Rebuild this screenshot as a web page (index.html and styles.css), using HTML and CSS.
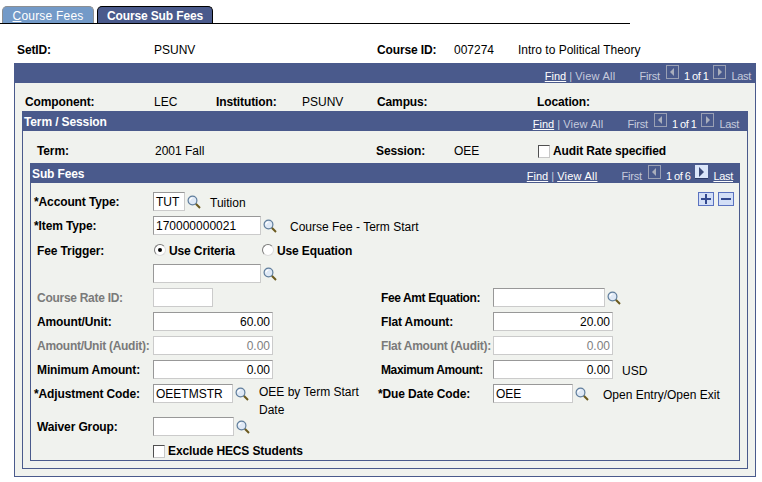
FILE: index.html
```html
<!DOCTYPE html>
<html lang="en">
<head>
<meta charset="utf-8">
<title>Course Sub Fees</title>
<link rel="stylesheet" href="styles.css">
</head>
<body>
<svg class="defs" width="0" height="0" aria-hidden="true">
  <symbol id="lens" viewBox="0 0 14 14">
    <path d="M8.8 8.8 L13 13" stroke="#6b5a1e" stroke-width="2" fill="none"/>
    <circle cx="5.5" cy="5.5" r="4.4" fill="#dfe9f6" stroke="#5f7d9c" stroke-width="1.2"/>
    <path d="M3 5.5 A2.5 2.5 0 0 1 5.5 3" stroke="#fff" stroke-width="1.2" fill="none"/>
  </symbol>
  <symbol id="prev-off" viewBox="0 0 13 14">
    <rect x="0.5" y="0.5" width="12" height="13" fill="none" stroke="#9aa0b4"/>
    <path d="M4 7 L8 3 V11 Z" fill="#a9aebc"/>
  </symbol>
  <symbol id="next-off" viewBox="0 0 13 14">
    <rect x="0.5" y="0.5" width="12" height="13" fill="none" stroke="#9aa0b4"/>
    <path d="M5 3 L9 7 L5 11 Z" fill="#a9aebc"/>
  </symbol>
  <symbol id="next-on" viewBox="0 0 13 14">
    <rect width="13" height="14" fill="#dbe6fa"/>
    <path d="M0 13 H13 V14 H0 Z" fill="#2d3a66"/>
    <path d="M4 2 L9 7 L4 12 Z" fill="#3c4a78"/>
  </symbol>
</svg>
<nav class="tabs">
  <a class="tab tab-off"><u>C</u>ourse Fees</a>
  <a class="tab tab-on">Course Sub Fees</a>
</nav>
<section class="info">
  <b class="info-l1">SetID:</b><span class="info-v1">PSUNV</span>
  <b class="info-l2">Course ID:</b><span class="info-v2">007274</span><span>Intro to Political Theory</span>
</section>
<section class="box box-outer">
  <header class="bar">
    <span class="nav nav-outer"><u>Find</u> | <i class="va">View All</i><i class="first">First</i><svg class="pg"><use href="#prev-off"/></svg><span class="cnt">1 of 1</span><svg class="pg"><use href="#next-off"/></svg><i class="last">Last</i></span>
  </header>
  <div class="comp">
    <b class="c1">Component:</b><span class="c2">LEC</span><b class="c3">Institution:</b><span class="c4">PSUNV</span><b class="c5">Campus:</b><b>Location:</b>
  </div>
  <section class="box box-term">
    <header class="bar"><b class="title">Term / Session</b>
      <span class="nav nav-term"><u>Find</u> | <i class="va">View All</i><i class="first">First</i><svg class="pg"><use href="#prev-off"/></svg><span class="cnt">1 of 1</span><svg class="pg"><use href="#next-off"/></svg><i class="last">Last</i></span>
    </header>
    <div class="term">
      <b class="t1">Term:</b><span class="t2">2001 Fall</span><b class="t3">Session:</b><span class="t4">OEE</span>
      <label class="chk"><span class="cb"></span><b>Audit Rate specified</b></label>
    </div>
    <section class="box box-sub">
      <header class="bar"><b class="title">Sub Fees</b>
        <span class="nav nav-sub"><u>Find</u> | <u class="va">View All</u><i class="first">First</i><svg class="pg"><use href="#prev-off"/></svg><span class="cnt">1 of 6</span><svg class="pg"><use href="#next-on"/></svg><u class="last">Last</u></span>
      </header>
      <div class="form">
        <div class="row">
          <b class="lab req">*Account Type:</b>
          <span class="inp w32">TUT</span><svg class="lens"><use href="#lens"/></svg><span class="desc d1">Tuition</span>
          <span class="grid-btns"><span class="btn btn-add" role="img" aria-label="Add row"></span><span class="btn btn-del" role="img" aria-label="Delete row"></span></span>
        </div>
        <div class="row">
          <b class="lab req">*Item Type:</b>
          <span class="inp w108">170000000021</span><svg class="lens"><use href="#lens"/></svg><span class="desc d2">Course Fee - Term Start</span>
        </div>
        <div class="row row-radio">
          <b class="lab">Fee Trigger:</b>
          <span class="rad rad-on"></span><b class="rl1">Use Criteria</b><span class="rad"></span><b>Use Equation</b>
        </div>
        <div class="row">
          <span class="lab"></span><span class="inp w108"></span><svg class="lens"><use href="#lens"/></svg>
        </div>
        <div class="row">
          <div class="half"><b class="lab dim">Course Rate ID:</b><span class="inp w60 off"></span></div>
          <div class="half"><b class="lab2 tight">Fee Amt Equation:</b><span class="inp w112"></span><svg class="lens"><use href="#lens"/></svg></div>
        </div>
        <div class="row">
          <div class="half"><b class="lab">Amount/Unit:</b><span class="inp w120 num">60.00</span></div>
          <div class="half"><b class="lab2">Flat Amount:</b><span class="inp w120 num">20.00</span></div>
        </div>
        <div class="row">
          <div class="half"><b class="lab dim">Amount/Unit (Audit):</b><span class="inp w120 num off">0.00</span></div>
          <div class="half"><b class="lab2 dim">Flat Amount (Audit):</b><span class="inp w120 num off">0.00</span></div>
        </div>
        <div class="row">
          <div class="half"><b class="lab">Minimum Amount:</b><span class="inp w120 num">0.00</span></div>
          <div class="half"><b class="lab2 tight">Maximum Amount:</b><span class="inp w120 num">0.00</span><span class="desc d3">USD</span></div>
        </div>
        <div class="row row-tall">
          <div class="half"><b class="lab req">*Adjustment Code:</b><span class="inp w80">OEETMSTR</span><svg class="lens"><use href="#lens"/></svg><span class="desc d4">OEE by Term Start Date</span></div>
          <div class="half"><b class="lab2 req2">*Due Date Code:</b><span class="inp w80">OEE</span><svg class="lens"><use href="#lens"/></svg><span class="desc d5">Open Entry/Open Exit</span></div>
        </div>
        <div class="row">
          <b class="lab">Waiver Group:</b><span class="inp w81"></span><svg class="lens"><use href="#lens"/></svg>
        </div>
        <div class="row row-chk">
          <span class="lab"></span><label class="chk"><span class="cb"></span><b>Exclude HECS Students</b></label>
        </div>
      </div>
    </section>
  </section>
</section>
</body>
</html>
```
FILE: styles.css
```css
html, body { margin: 0; padding: 0; background: #fff; }
body { width: 762px; height: 482px; overflow: hidden; font: 12px "Liberation Sans", Arial, sans-serif; color: #000; }
b { font-weight: bold; white-space: nowrap; letter-spacing: -0.12px; }
u { text-decoration: underline; }
i { font-style: normal; }
.defs { position: absolute; }

.tabs { display: flex; gap: 3px; height: 17px; width: 628px; padding: 6px 0 0 2px; border-bottom: 1px solid #000; }
.tab { display: block; height: 17px; line-height: 18px; text-align: center; border-radius: 5px 5px 0 0; box-sizing: border-box; }
.tab-off { width: 92px; background: #739ac8; color: #fff; border: 1px solid #8c8f93; border-bottom: 0; letter-spacing: 0.2px; }
.tab-on { width: 116px; background: #4a5a8c; color: #fff; font-weight: bold; border: 1px solid #000; border-bottom: 0; letter-spacing: -0.13px; }

.info { display: flex; height: 39px; align-items: center; padding: 12px 0 0 17px; box-sizing: border-box; }
.info-l1 { width: 137px; }
.info-v1 { width: 223px; }
.info-l2 { width: 77px; }
.info-v2 { width: 64px; }

.box { box-sizing: border-box; border: 1px solid #4a5a8c; border-top: 0; background: #f0f2ee; }
.box-outer { width: 742px; height: 414px; margin-left: 14px; }
.box-term { width: 726px; height: 358px; margin-left: 7px; }
.box-sub { width: 710px; height: 298px; margin-left: 7px; }

.bar { display: flex; height: 20px; margin: 0 -1px; background: #4a5a8c; color: #fff; padding: 0 0 0 2px; }
.title { line-height: 22px; }
.nav { margin-left: auto; display: flex; align-items: flex-start; white-space: pre; color: #c6cbdc; font-size: 11px; line-height: 13px; padding-top: 7px; height: 20px; box-sizing: border-box; }
.nav-outer { padding-right: 5px; }
.nav-term { padding-right: 9px; }
.nav-sub { padding-right: 7px; }
.nav u { color: #fff; }
.nav .va { letter-spacing: 0.25px; }
.nav .first { margin-left: 24px; letter-spacing: -0.2px; }
.nav .last { margin-left: 5px; letter-spacing: -0.3px; }
.nav .cnt { color: #fff; margin: 0 5px; letter-spacing: -0.5px; }
.pg { display: block; width: 13px; height: 14px; margin: -5px 0 0 6px; flex: none; }
.cnt + .pg { margin-left: 0; }

.comp { display: flex; height: 28px; align-items: center; padding: 9px 0 0 10px; box-sizing: border-box; }
.c1 { width: 129px; }
.c2 { width: 62px; }
.c3 { width: 86px; }
.c4 { width: 75px; }
.c5 { width: 160px; }

.term { display: flex; height: 32px; align-items: center; padding: 8px 0 0 14px; box-sizing: border-box; }
.t1 { width: 118px; }
.t2 { width: 221px; }
.t3 { width: 78px; }
.t4 { width: 84px; }

.form { padding-top: 9px; }
.row { display: flex; align-items: flex-start; height: 24px; padding-left: 6px; position: relative; }
.row-tall { height: 33px; }
.half { display: flex; align-items: flex-start; width: 344px; flex: none; }
.half + .half { width: 354px; }
.lab { width: 116px; flex: none; }
.lab2 { width: 112px; flex: none; white-space: nowrap; }
.row b { line-height: 21px; }
.row-radio b { line-height: 22px; }
.req { margin-left: -3px; padding-right: 3px; }
.req2 { margin-left: -3px; padding-right: 3px; }
.tight { letter-spacing: -0.38px; }
.dim { color: #7a7a7a; letter-spacing: -0.28px; }

.inp { display: block; flex: none; height: 19px; line-height: 19px; box-sizing: border-box; background: #fff; border: 1px solid; border-color: #989898 #cbcbcb #cbcbcb #989898; padding: 0 2px; white-space: nowrap; overflow: hidden; }
.off { border-color: #cbcbcb; color: #808080; }
.num { text-align: right; }
.w32 { width: 32px; }
.w60 { width: 60px; }
.w80 { width: 80px; }
.w81 { width: 81px; }
.w108 { width: 108px; }
.w112 { width: 112px; }
.w120 { width: 120px; }

.lens { width: 14px; height: 14px; flex: none; margin: 3px 0 0 2px; }
.desc { line-height: 23px; flex: none; }
.d1 { margin-left: 9px; }
.d2 { margin-left: 13px; }
.d3 { margin-left: 9px; }
.d4 { margin-left: 10px; width: 112px; line-height: 18px; margin-top: -1px; }
.d5 { margin-left: 14px; }

.grid-btns { display: flex; gap: 4px; position: absolute; right: 5px; top: 0; }
.btn { display: block; position: relative; width: 16px; height: 14px; border: 1px solid #5a72c0; background: #d3dff7; box-sizing: border-box; }
.btn::before { content: ""; position: absolute; left: 2px; top: 5px; width: 10px; height: 2px; background: #33498f; }
.btn-add::after { content: ""; position: absolute; left: 6px; top: 1px; width: 2px; height: 10px; background: #33498f; }

.rad { display: block; width: 12px; height: 12px; flex: none; box-sizing: border-box; border-radius: 50%; background: #fff; border: 1px solid; border-color: #7a7a7a #dcdcdc #dcdcdc #7a7a7a; margin: 4px 3px 0 1px; position: relative; }
.rad-on::after { content: ""; position: absolute; left: 3px; top: 3px; width: 4px; height: 4px; border-radius: 50%; background: #000; }
.rl1 { width: 92px; }

.chk { display: flex; align-items: flex-start; }
.cb { display: block; width: 12px; height: 13px; flex: none; box-sizing: border-box; background: #fff; border: 1px solid; border-color: #505050 #c8c8c8 #c8c8c8 #505050; margin: 4px 3px 0 0; }
.term .chk b { line-height: 21px; }
```
